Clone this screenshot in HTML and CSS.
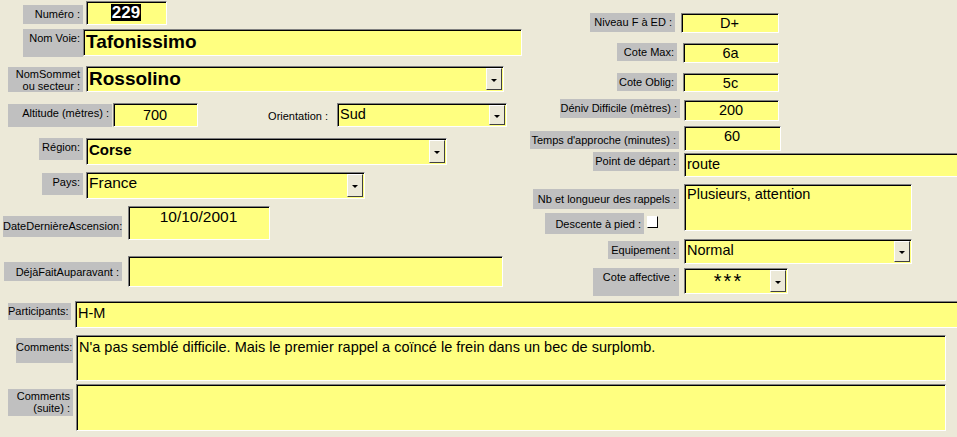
FILE: index.html
```html
<!doctype html>
<html lang="fr">
  <head>
    <meta charset="UTF-8" />
    <title>Voie - Tafonissimo</title>
    <link rel="stylesheet" href="styles.css">
  </head>
  <body>
    <div class="form">
      <div class="top">
        <!-- Left column: identification of the route -->
        <div class="col-left">
          <div class="row r-numero">
            <div class="label l-numero">Numéro :</div>
            <div class="field center f-numero"><span class="sel">229</span></div>
          </div>
          <div class="row r-voie">
            <div class="label l-voie">Nom Voie:</div>
            <div class="field big f-voie">Tafonissimo</div>
          </div>
          <div class="row r-sommet">
            <div class="label l-sommet">NomSommet<br>ou secteur :</div>
            <div class="field combo f-sommet"><span class="value big">Rossolino</span><span class="drop"></span></div>
          </div>
          <div class="row r-alt">
            <div class="label l-alt">Altitude (mètres) :</div>
            <div class="field center f-alt">700</div>
            <div class="plain l-orient">Orientation :</div>
            <div class="field combo f-orient"><span class="value">Sud</span><span class="drop"></span></div>
          </div>
          <div class="row r-region">
            <div class="label l-region">Région:</div>
            <div class="field combo f-region"><span class="value bold">Corse</span><span class="drop"></span></div>
          </div>
          <div class="row r-pays">
            <div class="label l-pays">Pays:</div>
            <div class="field combo f-pays"><span class="value mid">France</span><span class="drop"></span></div>
          </div>
          <div class="row r-date">
            <div class="label l-date">DateDernièreAscension:</div>
            <div class="field center mid f-date">10/10/2001</div>
          </div>
          <div class="row r-deja">
            <div class="label l-deja">DéjàFaitAuparavant :</div>
            <div class="field f-deja"></div>
          </div>
        </div>

        <!-- Right column: grades and approach -->
        <div class="col-right">
          <div class="row r-niveau">
            <div class="label l-niveau">Niveau F à ED :</div>
            <div class="field center f-niveau">D+</div>
          </div>
          <div class="row r-max">
            <div class="label l-max">Cote Max:</div>
            <div class="field center f-max">6a</div>
          </div>
          <div class="row r-oblig">
            <div class="label l-oblig">Cote Oblig:</div>
            <div class="field center f-oblig">5c</div>
          </div>
          <div class="row r-deniv">
            <div class="label l-deniv">Déniv Difficile (mètres) :</div>
            <div class="field center f-deniv">200</div>
          </div>
          <div class="row r-temps">
            <div class="label l-temps">Temps d'approche (minutes) :</div>
            <div class="field center f-temps">60</div>
          </div>
          <div class="row r-depart">
            <div class="label l-depart">Point de départ :</div>
            <div class="field f-depart">route</div>
          </div>
          <div class="row r-rappels">
            <div class="stack">
              <div class="label l-rappels">Nb et longueur des rappels :</div>
              <div class="row r-descente">
                <div class="label l-descente">Descente à pied :</div>
                <span class="check"></span>
              </div>
            </div>
            <div class="field f-rappels">Plusieurs, attention</div>
          </div>
          <div class="row r-equip">
            <div class="label l-equip">Equipement :</div>
            <div class="field combo f-equip"><span class="value">Normal</span><span class="drop"></span></div>
          </div>
          <div class="row r-affect">
            <div class="label l-affect">Cote affective :</div>
            <div class="field combo f-affect"><span class="value stars">***</span><span class="drop"></span></div>
          </div>
        </div>
      </div>

      <!-- Bottom: free text -->
      <div class="bottom">
        <div class="row r-part">
          <div class="label l-part">Participants:</div>
          <div class="field f-part">H-M</div>
        </div>
        <div class="row r-comm">
          <div class="label l-comm">Comments:</div>
          <div class="field f-comm">N'a pas semblé difficile. Mais le premier rappel a coïncé le frein dans un bec de surplomb.</div>
        </div>
        <div class="row r-suite">
          <div class="label l-suite">Comments<br>(suite) :</div>
          <div class="field f-suite"></div>
        </div>
      </div>
    </div>
  </body>
</html>
```

FILE: styles.css
```css
/* Access-style form on the XP beige background */
:root {
  --bg-color: #ece9d8;
  --label-gray: #c0c0c0;
  --field-yellow: #ffff80;
}

* {
  box-sizing: border-box;
}

body {
  margin: 0;
  background: var(--bg-color);
  color: #000;
  font-family: "Liberation Sans", Arial, sans-serif;
  height: 100vh;
  overflow: hidden;
}

.form {
  width: 957px;
}

.top {
  display: flex;
}

.col-left {
  width: 526px;
  flex: none;
}

.col-right {
  flex: 1;
}

.row {
  display: flex;
  align-items: flex-start;
}

/* Gray caption boxes */
.label {
  flex: none;
  background: var(--label-gray);
  font-size: 11px;
  line-height: 12px;
  text-align: right;
  padding: 3px 3px 0 0;
  white-space: nowrap;
}

.plain {
  flex: none;
  font-size: 11px;
  line-height: 12px;
  text-align: right;
}

/* Sunken yellow text boxes */
.field {
  flex: none;
  background: var(--field-yellow);
  border: 1px solid;
  border-color: #808080 #fff #fff #808080;
  box-shadow: inset 1px 1px 0 #000;
  font-size: 14.5px;
  line-height: 16px;
  padding: 2px 3px 0 2px;
  white-space: nowrap;
  overflow: hidden;
}

.center {
  text-align: center;
}

.big {
  font-size: 19px;
  line-height: 21px;
  font-weight: 700;
}

.bold {
  font-size: 15px;
  font-weight: 700;
}

.mid {
  font-size: 15.5px;
}

.sel {
  display: inline-block;
  background: #000;
  color: #fff;
  font-size: 17px;
  line-height: 17px;
  font-weight: 700;
  padding: 0 1px;
}

/* Combo boxes */
.combo {
  display: flex;
  padding: 0;
}

.combo .value {
  flex: 1;
  padding: 2px 3px 0 2px;
  overflow: hidden;
}

.drop {
  flex: none;
  width: 16px;
  margin: 1px 1px 1px 0;
  background: var(--bg-color);
  border: 1px solid;
  border-color: #fff #404040 #404040 #fff;
  display: flex;
  align-items: center;
  justify-content: center;
}

.drop::after {
  content: "";
  border-left: 3px solid transparent;
  border-right: 3px solid transparent;
  border-top: 3px solid #000;
  margin-top: 2px;
}

.combo .stars {
  text-align: center;
  font-size: 20px;
  line-height: 22px;
  letter-spacing: 2px;
  padding: 1px 0 0 2px;
}

.check {
  flex: none;
  width: 11px;
  height: 12px;
  margin: 3px 0 0 3px;
  background: #fff;
  border: 1px solid;
  border-color: #fff #000 #000 #fff;
}

/* Left column rows */
.r-numero { margin-top: 1px; }
.l-numero { margin: 4px 0 0 23px; width: 60px; height: 19px; }
.f-numero { margin-left: 3px; width: 81px; height: 24px; }

.r-voie { margin-top: 4px; }
.l-voie { margin-left: 23px; width: 60px; height: 28px; }
.f-voie { width: 439px; height: 27px; padding-top: 1px; }

.r-sommet { margin-top: 9px; }
.l-sommet { margin: 1px 0 0 8px; width: 75px; height: 25px; padding-top: 1px; line-height: 12px; }
.f-sommet { margin-left: 3px; width: 418px; height: 26px; }
.f-sommet .value { padding-top: 1px; }

.r-alt { margin-top: 11px; }
.l-alt { margin: 1px 0 0 8px; width: 104px; height: 23px; }
.f-alt { margin-left: 1px; width: 85px; height: 24px; padding-top: 3px; }
.l-orient { margin-left: 66px; width: 73px; padding: 7px 9px 0 0; }
.f-orient { width: 170px; height: 24px; }

.r-region { margin-top: 11px; }
.l-region { margin-left: 39px; width: 44px; height: 22px; }
.f-region { margin-left: 3px; width: 361px; height: 27px; }
.f-region .value { padding-top: 3px; }

.r-pays { margin-top: 7px; }
.l-pays { margin: 1px 0 0 42px; width: 41px; height: 22px; }
.f-pays { margin-left: 3px; width: 279px; height: 27px; }

.r-date { margin-top: 7px; }
.l-date { margin: 10px 0 0 3px; width: 119px; height: 21px; padding-top: 4px; }
.f-date { margin-left: 6px; width: 142px; height: 34px; }

.r-deja { margin-top: 16px; }
.l-deja { margin: 6px 0 0 4px; width: 118px; height: 19px; padding-top: 4px; }
.f-deja { margin-left: 6px; width: 375px; height: 31px; }

/* Right column rows */
.r-niveau { margin-top: 13px; }
.l-niveau { margin-left: 64px; width: 85px; height: 19px; }
.f-niveau { margin-left: 6px; width: 98px; height: 20px; padding-top: 1px; }

.r-max { margin-top: 10px; }
.l-max { margin-left: 91px; width: 60px; height: 18px; }
.f-max { margin-left: 6px; width: 96px; height: 20px; padding-top: 1px; }

.r-oblig { margin-top: 10px; }
.l-oblig { margin-left: 91px; width: 60px; height: 18px; }
.f-oblig { margin-left: 6px; width: 96px; height: 19px; padding-top: 1px; }

.r-deniv { margin-top: 7px; }
.l-deniv { margin-left: 34px; width: 120px; height: 19px; }
.f-deniv { margin: 1px 0 0 4px; width: 95px; height: 21px; padding-top: 1px; }

.r-temps { margin-top: 5px; }
.l-temps { margin: 5px 0 0 4px; width: 149px; height: 18px; }
.f-temps { margin-left: 5px; width: 97px; height: 25px; padding-top: 1px; }

.r-depart { margin-top: 1px; }
.l-depart { margin-left: 67px; width: 86px; height: 19px; }
.f-depart { margin: 1px 0 0 5px; width: 280px; height: 24px; }

.r-rappels { margin-top: 7px; }
.stack { width: 158px; flex: none; }
.l-rappels { margin: 5px 0 0 7px; width: 146px; height: 20px; padding-top: 4px; }
.r-descente { margin-top: 4px; }
.l-descente { margin-left: 19px; width: 99px; height: 21px; padding-top: 5px; }
.f-rappels { width: 228px; height: 47px; padding-top: 1px; }

.r-equip { margin-top: 5px; }
.l-equip { margin: 2px 0 0 82px; width: 71px; height: 18px; }
.f-equip { margin-left: 5px; width: 228px; height: 25px; }

.r-affect { margin-top: 4px; }
.l-affect { margin-left: 67px; width: 86px; height: 28px; }
.f-affect { margin-left: 5px; width: 104px; height: 26px; }

/* Bottom rows */
.bottom {
  margin-top: 5px;
}

.l-part { margin: 2px 0 0 8px; width: 63px; height: 17px; padding-top: 2px; }
.f-part { margin-left: 4px; width: 900px; height: 27px; padding-top: 3px; }

.r-comm { margin-top: 7px; }
.l-comm { margin: 3px 0 0 16px; width: 57px; height: 25px; }
.f-comm { margin-left: 3px; width: 870px; height: 46px; padding-top: 3px; }

.r-suite { margin-top: 3px; }
.l-suite { margin: 5px 0 0 8px; width: 65px; height: 27px; padding-top: 1px; }
.f-suite { margin-left: 3px; width: 870px; height: 47px; }
```
